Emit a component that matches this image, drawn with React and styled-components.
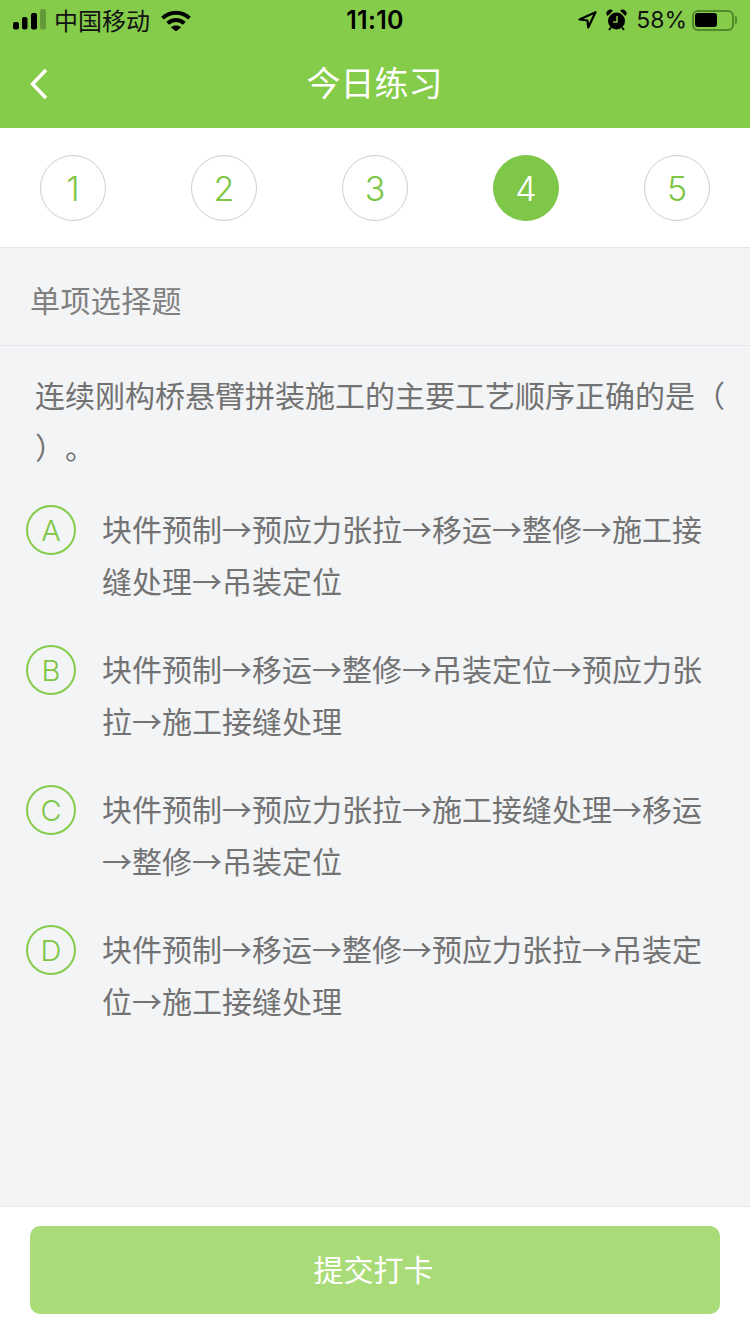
import styled, { createGlobalStyle } from 'styled-components';

const GlobalStyle = createGlobalStyle`
  html, body {
    margin: 0;
    padding: 0;
    background: #f3f4f6;
  }
  * {
    box-sizing: border-box;
  }
`;

const STEPS = [1, 2, 3, 4, 5];

const OPTIONS = [
  { key: 'A', text: '块件预制→预应力张拉→移运→整修→施工接缝处理→吊装定位' },
  { key: 'B', text: '块件预制→移运→整修→吊装定位→预应力张拉→施工接缝处理' },
  { key: 'C', text: '块件预制→预应力张拉→施工接缝处理→移运→整修→吊装定位' },
  { key: 'D', text: '块件预制→移运→整修→预应力张拉→吊装定位→施工接缝处理' },
];

export default function App() {
  return (
    <Page>
      <GlobalStyle />
      <Header>
        <StatusBar>
          <StatusLeft>
            <SignalIcon width="33" height="21" viewBox="0 0 33 21">
              <rect x="0" y="13" width="6" height="7.500" rx="2" fill="#000" />
              <rect x="9" y="8" width="5.500" height="12.500" rx="2" fill="#000" />
              <rect x="18" y="4" width="6" height="16.500" rx="2" fill="#000" />
              <rect x="27" y="0" width="6" height="20.500" rx="2" fill="#000" opacity="0.25" />
            </SignalIcon>
            <Carrier>中国移动</Carrier>
            <WifiIcon width="30" height="21" viewBox="0 0 30 21">
              <path d="M1.500 8.200C9 .8 21 .8 28.500 8.200" fill="none" stroke="#000" strokeWidth="4" />
              <path d="M6.700 13.400C11.300 8.900 18.700 8.900 23.300 13.400" fill="none" stroke="#000" strokeWidth="4" />
              <path d="M9.800 17.200c2.900-2.400 7.500-2.400 10.400 0L15 21.500z" fill="#000" />
            </WifiIcon>
          </StatusLeft>
          <Clock>11:10</Clock>
          <StatusRight>
            <svg width="19" height="18" viewBox="0 0 19 18">
              <path d="M17.500 1.200L1.500 8.500l8 1 .7 7z" fill="none" stroke="#000" strokeWidth="2.200" strokeLinejoin="round" />
            </svg>
            <AlarmIcon width="21" height="22" viewBox="0 0 21 22">
              <circle cx="10.500" cy="12" r="8.500" fill="#000" />
              <path d="M1.500 7a3.600 3.600 0 0 1 5.500-5.200zM19.500 7a3.600 3.600 0 0 0-5.500-5.200z" fill="#000" />
              <path d="M5 18.500l-2 2.500M16 18.500l2 2.500" stroke="#000" strokeWidth="2" />
              <path d="M11 7V13H7" fill="none" stroke="#86cc4b" strokeWidth="1.500" />
            </AlarmIcon>
            <Percent>58%</Percent>
            <Battery>
              <BatteryFill />
            </Battery>
            <BatteryNub />
          </StatusRight>
        </StatusBar>
        <NavBar>
          <BackButton>
            <svg width="18" height="32" viewBox="0 0 18 32">
              <path d="M16 2L2.500 16 16 30" fill="none" stroke="#fff" strokeWidth="3.400" />
            </svg>
          </BackButton>
          <Title>今日练习</Title>
        </NavBar>
      </Header>

      <Steps>
        {STEPS.map((n) => (
          <Step key={n} $active={n === 4}>{n}</Step>
        ))}
      </Steps>

      <Body>
        <SectionLabel>单项选择题</SectionLabel>
        <Question>连续刚构桥悬臂拼装施工的主要工艺顺序正确的是（ ）。</Question>
        <OptionList>
          {OPTIONS.map((o) => (
            <Option key={o.key}>
              <OptionBadge>{o.key}</OptionBadge>
              <OptionText>{o.text}</OptionText>
            </Option>
          ))}
        </OptionList>
      </Body>

      <Footer>
        <SubmitButton>提交打卡</SubmitButton>
      </Footer>
    </Page>
  );
}

const Page = styled.div`
  width: 750px;
  height: 1334px;
  display: flex;
  flex-direction: column;
  overflow: hidden;
  font-family: "Noto Sans CJK SC", "Liberation Sans", sans-serif;
  text-spacing-trim: space-all;
  background: #f3f4f6;
`;

const Header = styled.header`
  height: 128px;
  background: #86cc4b;
  flex-shrink: 0;
`;

const StatusBar = styled.div`
  height: 40px;
  padding: 0 13px;
  display: grid;
  grid-template-columns: 1fr auto 1fr;
  align-items: center;
  color: #000;
`;

const StatusLeft = styled.div`
  display: flex;
  align-items: center;
  gap: 9px;
`;

const SignalIcon = styled.svg`
  margin-top: -1px;
`;

const WifiIcon = styled.svg`
  margin-left: 2px;
`;

const Carrier = styled.span`
  font-size: 24px;
  line-height: 40px;
  margin-left: -1px;
  color: #111;
`;

const Clock = styled.span`
  font-family: "Inter", "Liberation Sans", sans-serif;
  font-size: 25px;
  font-weight: 600;
  line-height: 40px;
  letter-spacing: 0.3px;
`;

const StatusRight = styled.div`
  display: flex;
  align-items: center;
  justify-content: flex-end;
`;

const AlarmIcon = styled.svg`
  margin-left: 9px;
`;

const Percent = styled.span`
  font-family: "Inter", "Liberation Sans", sans-serif;
  font-size: 23px;
  line-height: 40px;
  margin-left: 9px;
  margin-right: 5px;
  color: #111;
`;

const Battery = styled.div`
  width: 42px;
  height: 21px;
  padding: 1.500px 1px;
  border: 2px solid #4f8a28;
  border-radius: 6px;
`;

const BatteryFill = styled.div`
  width: 22px;
  height: 100%;
  background: #000;
  border-radius: 3px;
`;

const BatteryNub = styled.div`
  width: 2px;
  height: 8px;
  margin-left: 1px;
  background: #4f8a28;
  border-radius: 0 2px 2px 0;
`;

const NavBar = styled.div`
  position: relative;
  height: 88px;
  display: flex;
  align-items: center;
  justify-content: center;
`;

const BackButton = styled.div`
  position: absolute;
  left: 30px;
  top: 28px;
  height: 32px;
  display: flex;
`;

const Title = styled.h1`
  margin: -4px 1px 0 0;
  font-size: 34px;
  font-weight: 400;
  line-height: 88px;
  color: #fff;
`;

const Steps = styled.nav`
  height: 120px;
  padding: 27px 40px 0;
  display: flex;
  justify-content: space-between;
  align-items: flex-start;
  background: #fff;
  border-bottom: 1px solid #e6e7ea;
  flex-shrink: 0;
`;

const Step = styled.div`
  width: 66px;
  height: 66px;
  display: flex;
  align-items: center;
  justify-content: center;
  border-radius: 50%;
  font-family: "Inter", "Liberation Sans", sans-serif;
  font-size: 34px;
  font-weight: 300;
  color: ${(p) => (p.$active ? '#fff' : '#7cc644')};
  background: ${(p) => (p.$active ? '#7fc748' : '#fff')};
  border: 1px solid ${(p) => (p.$active ? '#7fc748' : '#cfcfcf')};
`;

const Body = styled.main`
  flex: 1;
  min-height: 0;
`;

const SectionLabel = styled.div`
  height: 98px;
  padding-left: 30px;
  font-size: 30px;
  letter-spacing: 0.4px;
  line-height: 102px;
  color: #808080;
  border-bottom: 1px solid #e6e7ea;
`;

const Question = styled.p`
  margin: 0;
  padding: 22px 20px 0 35px;
  font-size: 30px;
  line-height: 52px;
  color: #727272;
`;

const OptionList = styled.div`
  margin-top: 30px;
  padding: 0 20px 0 26px;
  display: flex;
  flex-direction: column;
  gap: 36px;
`;

const Option = styled.div`
  display: flex;
  align-items: flex-start;
  gap: 26px;
`;

const OptionBadge = styled.div`
  width: 50px;
  height: 50px;
  margin-top: 3px;
  flex-shrink: 0;
  display: flex;
  align-items: center;
  justify-content: center;
  border: 2px solid #86cc4b;
  border-radius: 50%;
  font-family: "Inter", "Liberation Sans", sans-serif;
  font-size: 29px;
  font-weight: 300;
  color: #7cc644;
`;

const OptionText = styled.div`
  width: 610px;
  font-size: 30px;
  line-height: 52px;
  color: #727272;
`;

const Footer = styled.footer`
  height: 128px;
  padding: 19px 30px 0;
  background: #fff;
  border-top: 1px solid #e8e9ec;
  flex-shrink: 0;
`;

const SubmitButton = styled.button`
  display: block;
  width: 690px;
  height: 88px;
  padding: 0 3px 4px 0;
  border: none;
  border-radius: 10px;
  background: #a9dc78;
  color: #fff;
  font-family: inherit;
  font-size: 30px;
`;
